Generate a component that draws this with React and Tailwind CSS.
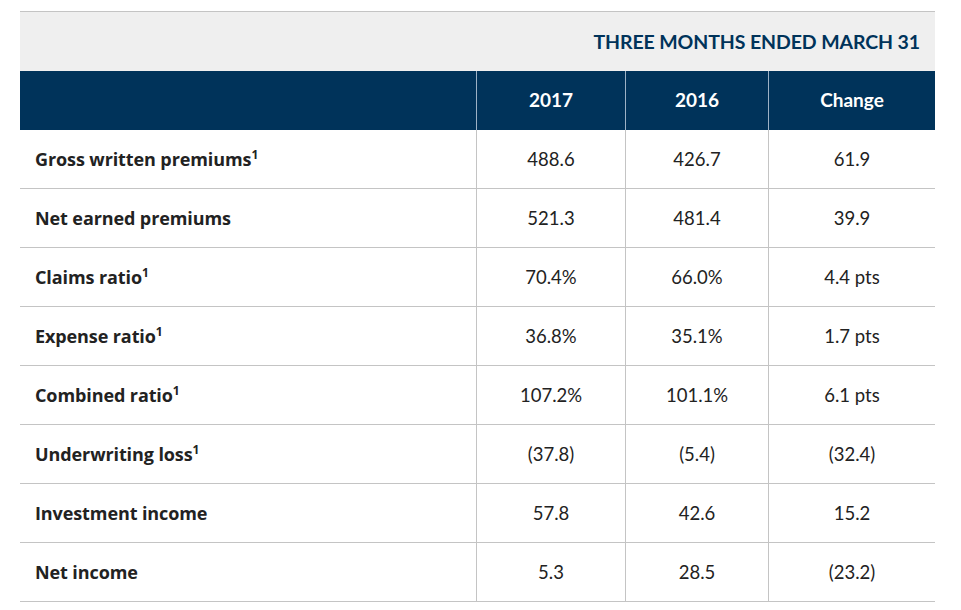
import React from "react";

const rows = [
  { label: "Gross written premiums", sup: true, a: "488.6", b: "426.7", c: "61.9" },
  { label: "Net earned premiums", sup: false, a: "521.3", b: "481.4", c: "39.9" },
  { label: "Claims ratio", sup: true, a: "70.4%", b: "66.0%", c: "4.4 pts" },
  { label: "Expense ratio", sup: true, a: "36.8%", b: "35.1%", c: "1.7 pts" },
  { label: "Combined ratio", sup: true, a: "107.2%", b: "101.1%", c: "6.1 pts" },
  { label: "Underwriting loss", sup: true, a: "(37.8)", b: "(5.4)", c: "(32.4)" },
  { label: "Investment income", sup: false, a: "57.8", b: "42.6", c: "15.2" },
  { label: "Net income", sup: false, a: "5.3", b: "28.5", c: "(23.2)" },
];

const cols = "grid grid-cols-[456px_149px_143px_167px]";

export default function App() {
  return (
    <div className="bg-white w-[961px] h-[610px] pt-[11px] pl-[20px] font-['Lato',_'Open_Sans',_sans-serif] text-[#222]">
      <div className="w-[915px] border-t border-[#c4c4c4]">
        <div className="h-[59px] bg-[#efefef] flex items-center justify-end pr-[15px]">
          <span className="text-[19.5px] font-bold text-[#00335a] tracking-[-0.1px]">
            THREE MONTHS ENDED MARCH 31
          </span>
        </div>
        <div className={`${cols} h-[59px] bg-[#00335a] text-white text-[19px] font-bold`}>
          <div></div>
          <div className="flex items-center justify-center border-l border-[#9db2c6]">2017</div>
          <div className="flex items-center justify-center border-l border-[#9db2c6]">2016</div>
          <div className="flex items-center justify-center border-l border-[#9db2c6]">Change</div>
        </div>
        {rows.map((r) => (
          <div key={r.label} className={`${cols} h-[59px] border-b border-[#c4c4c4] text-[18.5px]`}>
            <div className="flex items-center pl-[15px] pt-px font-bold font-['Open_Sans',_sans-serif] text-[18px] tracking-[-0.1px]">
              <span>
                {r.label}
                {r.sup && <sup className="text-[12px] font-bold top-[-0.6em]">1</sup>}
              </span>
            </div>
            <div className="flex items-center justify-center pt-px border-l border-[#c4c4c4]">{r.a}</div>
            <div className="flex items-center justify-center pt-px border-l border-[#c4c4c4]">{r.b}</div>
            <div className="flex items-center justify-center pt-px border-l border-[#c4c4c4]">{r.c}</div>
          </div>
        ))}
      </div>
    </div>
  );
}
